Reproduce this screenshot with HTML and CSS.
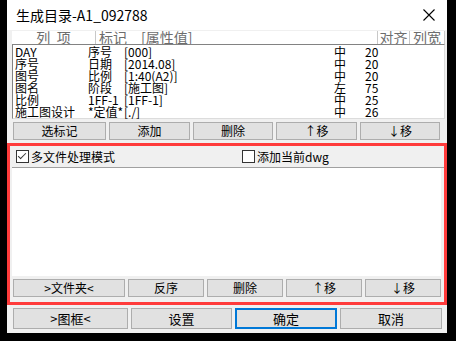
FILE: index.html
```html
<!DOCTYPE html>
<html lang="zh-CN">
<head>
    <meta charset="UTF-8">
    <title>生成目录</title>
    <link rel="stylesheet" href="styles.css">
</head>
<body>
    <div class="window">
        <div class="titlebar">
            <span class="title">生成目录-A1_092788</span>
            <svg class="close" width="12" height="12" viewBox="0 0 12 12">
                <path d="M0.5 0.5 L11.5 11.5 M11.5 0.5 L0.5 11.5" stroke="#000" stroke-width="1.1" fill="none"/>
            </svg>
        </div>

        <div class="list-head">
            <div class="h-name">列&nbsp;&nbsp;项</div>
            <div class="h-mark">标记　[属性值]</div>
            <div class="h-align">对齐</div>
            <div class="h-width">列宽</div>
        </div>
        <div class="list">
            <div class="row"><span>DAY</span><span>序号</span><span>[000]</span><span>中</span><span>20</span></div>
            <div class="row"><span>序号</span><span>日期</span><span>[2014.08]</span><span>中</span><span>20</span></div>
            <div class="row"><span>图号</span><span>比例</span><span>[1:40(A2)]</span><span>中</span><span>20</span></div>
            <div class="row"><span>图名</span><span>阶段</span><span>[施工图]</span><span>左</span><span>75</span></div>
            <div class="row"><span>比例</span><span>1FF-1</span><span>[1FF-1]</span><span>中</span><span>25</span></div>
            <div class="row"><span>施工图设计</span><span>*定值*</span><span>[./]</span><span>中</span><span>26</span></div>
        </div>

        <div class="btn-row top-btns">
            <button class="w93">选标记</button>
            <button class="w81">添加</button>
            <button class="w80">删除</button>
            <button class="w81">↑移</button>
            <button class="w80">↓移</button>
        </div>

        <div class="files-box">
            <div class="options">
                <label class="check"><span class="box checked"></span>多文件处理模式</label>
                <label class="check second"><span class="box"></span>添加当前dwg</label>
            </div>
            <div class="file-list"></div>
            <div class="btn-row file-btns">
                <button class="w112">&gt;文件夹&lt;</button>
                <button class="w76">反序</button>
                <button class="w76">删除</button>
                <button class="w76">↑移</button>
                <button class="w76">↓移</button>
            </div>
        </div>

        <div class="btn-row bottom-btns">
            <button class="w115">&gt;图框&lt;</button>
            <button class="w101">设置</button>
            <button class="w102 default">确定</button>
            <button class="w102">取消</button>
        </div>
    </div>
</body>
</html>
```

FILE: styles.css
```css
body {
    margin: 0;
    background-color: #000;
    font-family: "Noto Sans CJK SC", sans-serif;
    font-size: 12px;
    color: #000;
}
.window {
    margin-left: 7px;
    width: 440px;
    height: 333px;
    background-color: #f0f0f0;
    overflow: hidden;
}
.titlebar {
    height: 30px;
    background-color: #fff;
    display: flex;
    align-items: center;
    justify-content: space-between;
    padding: 0 9px;
}
.title {
    font-size: 14px;
    line-height: 30px;
}
.close {
    margin-right: 3px;
}
.list-head {
    margin: 1px 2px 0 5px;
    height: 13px;
    display: flex;
    background-color: #fff;
    color: #6d6d6d;
    font-size: 14px;
    line-height: 13px;
    overflow: hidden;
}
.list-head div {
    border-right: 1px solid #c8c8c8;
    white-space: nowrap;
}
.h-name {
    width: 83px;
    text-align: center;
}
.h-mark {
    width: 278px;
    padding-left: 3px;
}
.h-align {
    width: 31px;
    text-align: center;
}
.h-width {
    flex: 1;
    text-align: center;
}
.list {
    margin: 0 2px 0 5px;
    height: 72px;
    background-color: #fff;
    border: 1px solid #828282;
    border-right-color: #dcdcdc;
    border-bottom-color: #dcdcdc;
    padding-top: 1px;
}
.row {
    display: grid;
    grid-template-columns: 73px 36px 210px 31px 30px;
    height: 12px;
    line-height: 12px;
    padding-left: 2px;
    white-space: nowrap;
}
.btn-row {
    display: flex;
    gap: 3px;
    padding-left: 6px;
}
button {
    font-family: "Noto Sans CJK SC", sans-serif;
    font-size: 12px;
    background-color: #e1e1e1;
    border: 1px solid #adadad;
    padding: 0;
    color: #000;
}
.top-btns {
    margin-top: 3px;
}
.top-btns button {
    height: 18px;
    line-height: 16px;
}
.w93 { width: 93px; }
.w81 { width: 81px; }
.w80 { width: 80px; }
.w112 { width: 112px; }
.w76 { width: 76px; }
.w115 { width: 115px; }
.w101 { width: 101px; }
.w102 { width: 102px; }
.files-box {
    margin-top: 3px;
    width: 434px;
    height: 156px;
    border: 3px solid #ff3b3b;
}
.options {
    height: 21px;
    display: flex;
    align-items: center;
    border-bottom: 1px solid #a0a0a0;
    margin-left: 2px;
}
.check {
    display: flex;
    align-items: center;
    gap: 2px;
    font-size: 12px;
    line-height: 14px;
}
.check:first-child {
    margin-left: 4px;
}
.check.second {
    margin-left: 127px;
}
.box {
    width: 11px;
    height: 11px;
    border: 1px solid #333;
    background-color: #fff;
    position: relative;
}
.box.checked::after {
    content: "";
    position: absolute;
    left: 3px;
    top: 0px;
    width: 3px;
    height: 7px;
    border-right: 1.5px solid #333;
    border-bottom: 1.5px solid #333;
    transform: rotate(45deg);
}
.file-list {
    margin-left: 2px;
    width: 429px;
    height: 108px;
    background-color: #fff;
}
.file-btns {
    margin-top: 3px;
    padding-left: 3px;
}
.file-btns button {
    height: 18px;
    line-height: 16px;
}
.bottom-btns {
    margin-top: 3px;
}
.bottom-btns button {
    height: 21px;
    line-height: 19px;
    font-size: 13px;
}
button.default {
    border: 2px solid #0078d7;
    line-height: 17px;
}
```
